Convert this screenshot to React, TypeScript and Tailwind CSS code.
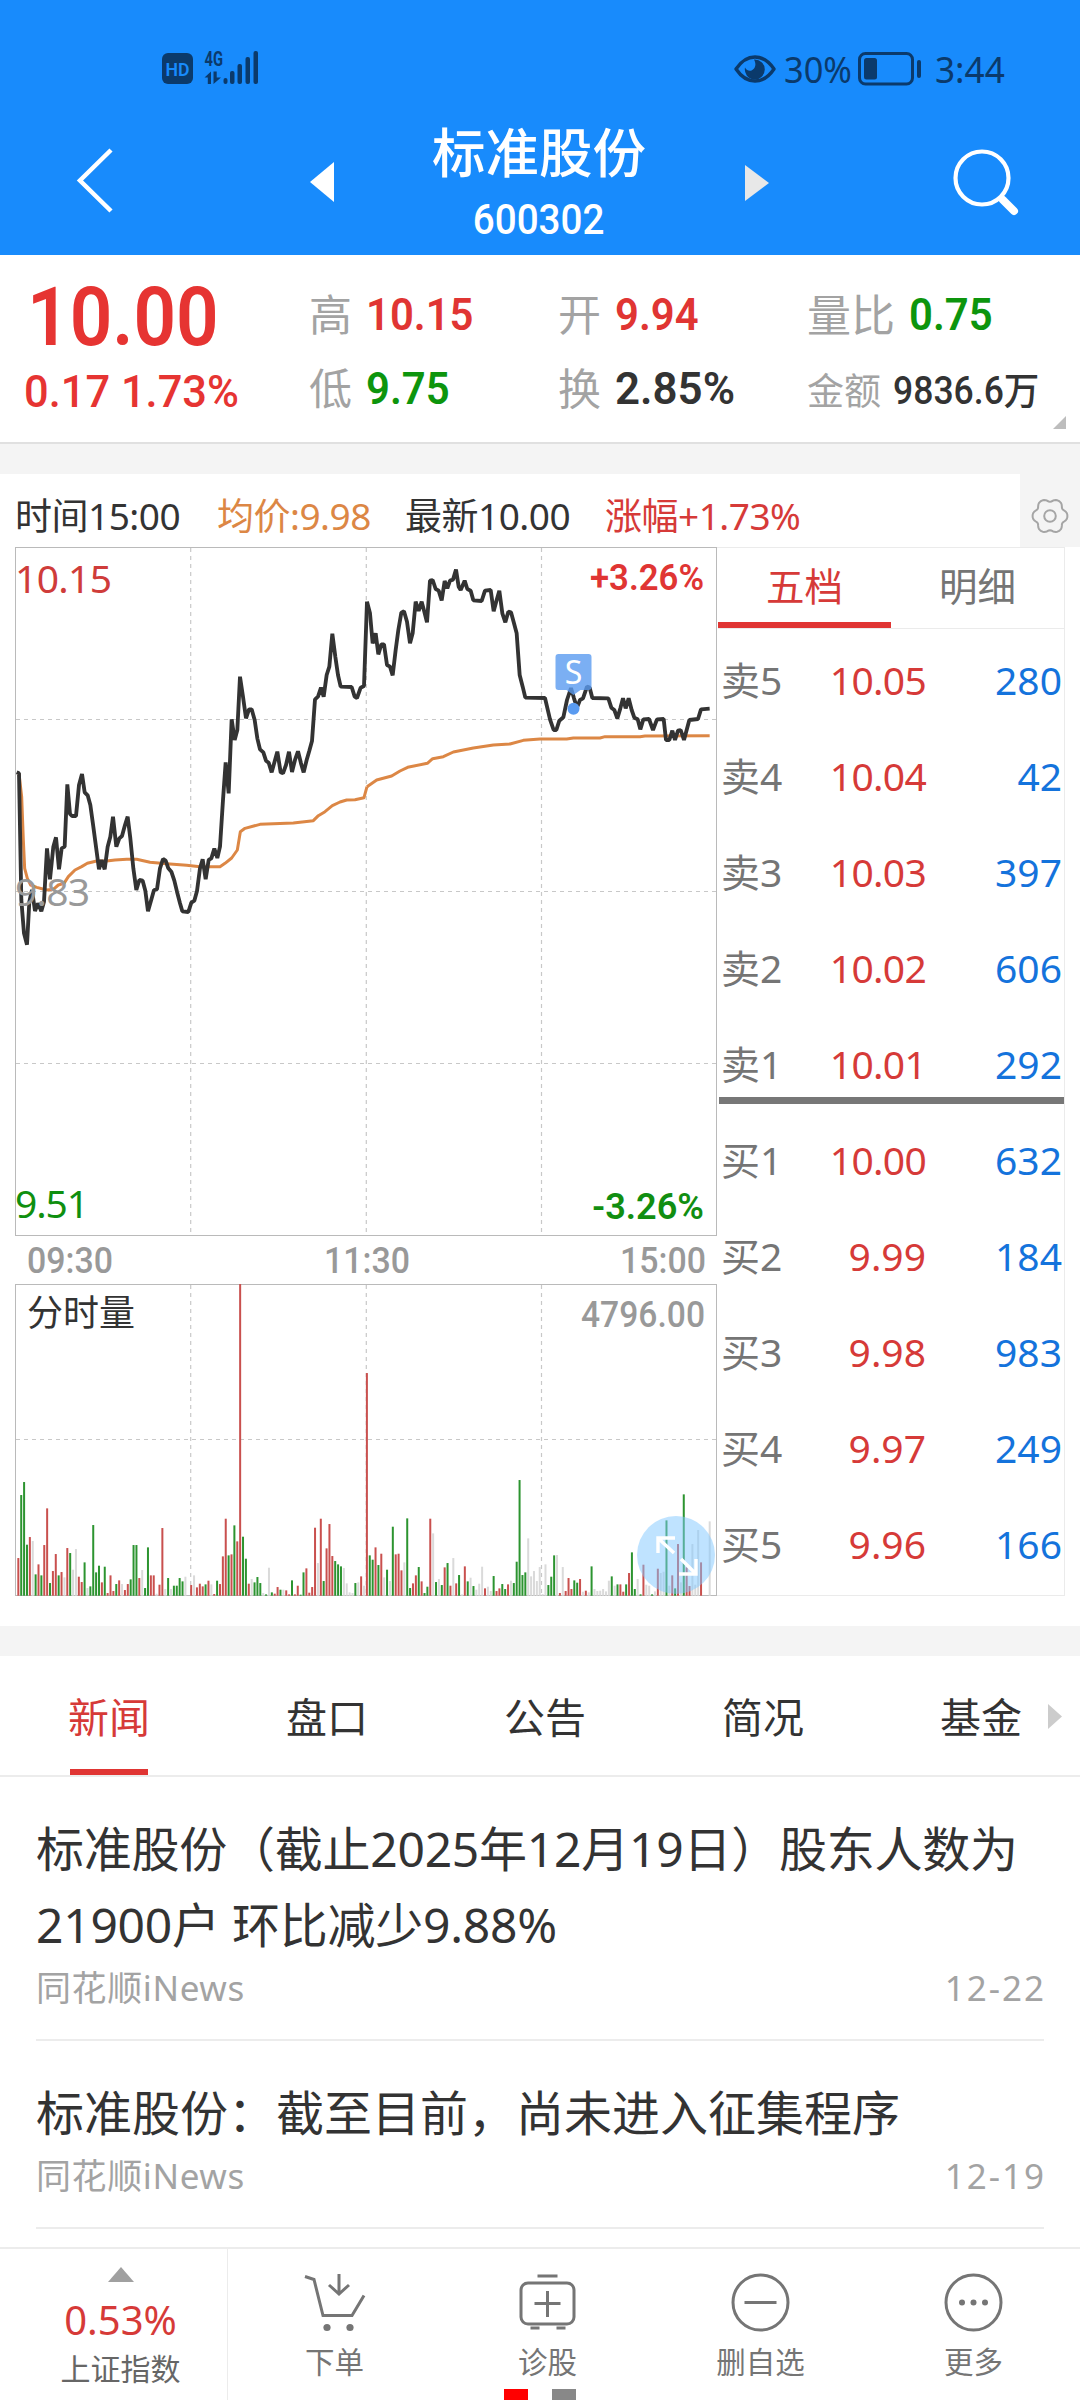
import React from 'react';
import clsx from 'clsx';

const STATS = [
  { label: '高', value: '10.15', color: 'text-[#e03533]', label2: '低', value2: '9.75', color2: 'text-[#0d950d]' },
  { label: '开', value: '9.94', color: 'text-[#e03533]', label2: '换', value2: '2.85%', color2: 'text-[#333]' },
];

const SELLS = [
  ['卖5', '10.05', '280'],
  ['卖4', '10.04', '42'],
  ['卖3', '10.03', '397'],
  ['卖2', '10.02', '606'],
  ['卖1', '10.01', '292'],
];

const BUYS = [
  ['买1', '10.00', '632'],
  ['买2', '9.99', '184'],
  ['买3', '9.98', '983'],
  ['买4', '9.97', '249'],
  ['买5', '9.96', '166'],
];

const NEWS = [
  { title: '标准股份（截止2025年12月19日）股东人数为21900户 环比减少9.88%', source: '同花顺iNews', date: '12-22', tight: true },
  { title: '标准股份：截至目前，尚未进入征集程序', source: '同花顺iNews', date: '12-19', tight: false },
];

// Both lines are kept in thirds of a pixel, in two halves: before and after the lunch break
const PRICE_AM =
  '50,697 57,700 64,1080 72,1180 81,1214 88,1085 96,1050 105,1113 114,1090 124,1114 132,1085 141,925 150,1018 160,920 168,892 177,988 185,925 194,920 202,733 210,822 216,828 228,828 237,735 246,702 254,757 263,766 271,795 280,860 297,988 305,960 314,988 323,920 331,890 339,830 349,920 358,895 366,888 375,855 383,830 391,895 400,985 409,1050 418,1020 428,1022 436,1052 444,1114 453,1082 462,1050 471,1048 480,985 489,957 497,962 505,985 514,995 523,1022 531,1055 540,1090 547,1114 565,1116 574,1088 583,1082 591,1053 600,985 608,958 617,1018 626,960 634,955 643,926 652,954 660,920 669,780 677,667 686,760 695,538 704,600 712,570 720,410 729,470 738,535 747,508 755,508 764,540 772,595 780,628 790,637 798,662 806,668 815,697 832,635 842,697 849,700 858,675 867,635 876,696 885,660 894,634 903,670 911,697 920,660 928,632 936,603 945,478 954,470 963,443 971,470 980,405 988,380 997,281 1006,350 1014,405 1022,440 1055,441 1064,470 1071,474 1082,443 1092,438 1101,185';
const PRICE_PM =
  '51,185 60,220 68,310 77,280 85,343 94,313 102,313 111,375 120,380 128,406 137,330 145,270 154,218 162,214 171,245 180,310 188,280 197,185 206,213 215,185 223,215 231,247 240,122 248,120 257,147 266,152 275,181 284,123 292,145 300,122 309,119 318,89 326,140 332,150 344,122 352,147 362,152 370,181 395,183 405,152 422,150 431,214 440,180 448,152 457,220 466,247 475,215 483,217 492,250 500,280 509,405 518,440 526,473 585,474 600,538 611,570 619,570 628,542 640,532 651,480 663,444 672,475 681,503 690,480 699,475 711,440 719,443 727,474 775,475 784,503 793,510 802,535 811,505 819,475 827,505 836,475 845,510 853,533 863,538 871,568 880,538 897,537 909,570 921,538 941,537 948,600 958,600 967,572 975,600 984,572 992,570 1002,600 1018,540 1044,537 1053,508 1079,506';
const AVG_AM =
  '57,700 65,770 70,900 74,985 82,1015 92,1035 110,1042 140,1050 160,1048 175,1035 192,1030 205,1010 225,990 245,980 262,970 290,963 320,963 345,960 380,958 410,958 450,967 500,971 560,976 600,980 660,980 675,970 695,954 712,930 721,875 735,865 780,853 880,849 940,842 955,827 975,815 997,797 1020,786 1040,780 1065,779 1092,773 1101,740';
const AVG_PM =
  '51,740 80,720 125,708 150,693 173,682 232,670 248,656 280,650 310,636 370,624 430,615 480,612 520,601 570,597 650,597 670,594 750,594 765,590 870,590 885,588 1079,587';

// One bar per minute: r = up, g = down, n = unchanged
const VOLUME =
  'r113 g302 g341 g153 r176 n164 g64 r94 g61 r152 r262 g38 r74 r125 g61 r71 n55 r143 g128 n78 n140 r57 r41 g100 n23 g28 g212 g70 g90 r40 g87 r8 r61 r14 g35 r46 n35 r17 r35 g49 g152 g152 r53 n77 g23 g145 r61 r61 n6 r33 r203 n20 g53 n20 g30 g30 g53 g43 n57 n0 r32 n61 r25 r36 r28 g34 r45 n34 r5 g45 r35 r118 r231 g121 r124 g211 r163 r935 g177 g111 r36 n50 g40 g56 g38 n8 g4 n84 g10 r6 r26 g18 n18 r16 r4 g46 r4 r30 g3 g70 r82 r9 r26 r204 n98 r231 g44 r142 r215 r119 g104 g94 g88 n83 n37 n10 n8 g38 n40 r58 n30 ' +
  'r668 g121 g108 r145 g92 r126 n55 g78 n44 g207 r124 r126 r76 n100 g232 g23 r37 r61 g86 r43 g8 g27 r231 n187 g41 n50 g32 r85 g98 r30 n113 r37 g62 n4 r88 g43 n54 g29 n18 n36 n87 r22 n27 n14 g59 r14 r22 g35 g20 r34 n45 g38 g102 g347 g62 g70 n172 n58 n74 n44 n86 n5 n94 g32 g57 g121 n122 r8 n86 r14 r53 r20 g46 g39 r50 n12 r15 n10 g88 n20 n14 n15 n20 n13 n45 g58 n30 g34 r34 r12 g34 r68 g130 g20 n50 g4 r93 n33 n30 g4 n13 r81 n68 n72 g226 n30 r61 g22 r155 n40 g304 r85 r29 n155 n33 n197 r100 n0 n0 n223';

const BAR_COLORS: Record<string, string> = { r: '#c9504e', g: '#2c9430', n: '#dadada' };

const bars = VOLUME.split(' ').map((item, i) => ({
  x: (55 + i * 8.642) / 3,
  height: Number(item.slice(1)) / 3,
  fill: BAR_COLORS[item[0]],
}));

const gearPoints = Array.from({ length: 73 }, (_, i) => {
  const a = (i * Math.PI) / 36;
  const r = 16.1 + 1.6 * Math.cos(6 * a) - 0.3 * Math.cos(12 * a);
  return `${(20 + r * Math.cos(a)).toFixed(2)},${(20 + r * Math.sin(a)).toFixed(2)}`;
}).join(' ');

const StatusBar: React.FC = () => (
  <div className="flex h-[104px] items-start justify-between pl-[161px] pr-[73px] pt-[48px] text-[#0b3a6b]">
    <svg width="100" height="40" viewBox="161 48 100 40">
      <rect x="162" y="53" width="31" height="31" rx="6" fill="#0b3a6b" />
      <text x="165.5" y="75.5" fontFamily="Roboto" fontWeight="600" fontSize="19" textLength="24" lengthAdjust="spacingAndGlyphs" fill="#188bfc">HD</text>
      <text x="204.5" y="66" fontFamily="Roboto" fontWeight="700" fontSize="21" textLength="18.5" lengthAdjust="spacingAndGlyphs" fill="#0b3a6b">4G</text>
      <g fill="#0b3a6b">
        <path d="M204.500 77.500l6.500-6v12.500h-3.200v-6.500zM213.500 71.500h3.200v6h4.300l-7.500 6.500z" />
        <rect x="223.500" y="78" width="4" height="6" rx="2" />
        <rect x="230" y="71" width="4.500" height="13" rx="2" />
        <rect x="237.500" y="64" width="4.500" height="20" rx="2" />
        <rect x="245.500" y="57" width="4.500" height="27" rx="2" />
        <rect x="253.500" y="51" width="4.500" height="33" rx="2" />
      </g>
    </svg>
    <div className="flex h-[42px] items-center font-['Noto_Sans',sans-serif] text-[37px] leading-[42px]">
      <svg width="42" height="28" viewBox="0 0 42 28" fill="none">
        <path d="M2 14C8 5 14 2 21 2s13 3 19 12c-6 9-12 12-19 12S8 23 2 14z" stroke="#0b3a6b" strokeWidth="3.400" strokeLinejoin="round" />
        <path d="M20 4.500a10 10 0 1 1-9 8c2 4 6 4 8 2 3-3 3-6 1-10z" fill="#0b3a6b" />
      </svg>
      <span className="ml-[8px] inline-block w-[70px] origin-left scale-x-[0.93] whitespace-nowrap">30%</span>
      <svg className="ml-[4px]" width="64" height="34" viewBox="0 0 64 34" fill="none">
        <rect x="1.500" y="1.500" width="53" height="30.500" rx="6" stroke="#0b3a6b" strokeWidth="3" />
        <rect x="6" y="6" width="13" height="21.500" rx="2.500" fill="#0b3a6b" />
        <rect x="59" y="8" width="4" height="18" rx="2" fill="#0b3a6b" />
      </svg>
      <span className="ml-[13px] inline-block w-[72px] origin-left scale-x-[0.95] whitespace-nowrap">3:44</span>
    </div>
  </div>
);

const Header: React.FC = () => (
  <header className="h-[255px] bg-[#188bfc]">
    <StatusBar />
    <div className="flex h-[151px] items-start text-white">
      <svg className="ml-[72px] mt-[40px]" width="44" height="72" viewBox="0 0 44 72" fill="none">
        <path d="M39 6L8 36.500 39 67" stroke="#fff" strokeWidth="4.500" />
      </svg>
      <svg className="ml-[194px] mt-[58px]" width="24" height="40">
        <path d="M24 0v40L0 20z" fill="#fff" />
      </svg>
      <div className="ml-[85px] flex w-[240px] flex-col items-center">
        <h1 className="mt-[16px] text-[53.500px] font-medium leading-[66px]">标准股份</h1>
        <span className="mt-[14px] inline-block scale-x-[0.92] font-['Roboto',sans-serif] text-[42px] font-medium leading-[40px]">600302</span>
      </div>
      <svg className="ml-[86px] mt-[61px]" width="24" height="36">
        <path d="M0 0v36L24 18z" fill="#e8e8e8" />
      </svg>
      <svg className="ml-[184px] mt-[43px]" width="70" height="72" viewBox="0 0 70 72" fill="none" stroke="#fff">
        <circle cx="29" cy="31" r="26.500" strokeWidth="4.200" />
        <path d="M50 53l11 11" strokeWidth="8" strokeLinecap="round" />
      </svg>
    </div>
  </header>
);

const Quote: React.FC = () => (
  <section className="relative flex h-[189px] border-b-2 border-[#e0e0e0] bg-white">
    <div className="w-[309px] font-['Roboto',sans-serif] text-[#e63432]">
      <div className="ml-[27px] mt-[17px] origin-left scale-x-[0.91] whitespace-nowrap text-[82px] font-semibold leading-[90px]">10.00</div>
      <div className="ml-[24px] mt-[6px] origin-left scale-x-[0.965] whitespace-nowrap text-[45px] font-medium leading-[48px]">0.17 1.73%</div>
    </div>
    {STATS.map((s) => (
      <div key={s.label} className="flex w-[249px] flex-col pt-[35px]">
        <div className="flex h-[50px] items-center whitespace-nowrap">
          <span className="w-[57px] text-[43px] leading-[50px] text-[#a3a3a3]">{s.label}</span>
          <span className={clsx("origin-left scale-x-[0.93] font-['Roboto',sans-serif] text-[45px] font-semibold leading-[50px]", s.color)}>{s.value}</span>
        </div>
        <div className="mt-[24px] flex h-[50px] items-center whitespace-nowrap">
          <span className="w-[57px] text-[43px] leading-[50px] text-[#a3a3a3]">{s.label2}</span>
          <span
            className={clsx(
              "origin-left font-['Roboto',sans-serif] text-[45px] font-semibold leading-[50px]",
              s.value2.endsWith('%') ? 'scale-x-[0.975]' : 'scale-x-[0.93]',
              s.color2
            )}
          >
            {s.value2}
          </span>
        </div>
      </div>
    ))}
    <div className="flex flex-col pt-[35px]">
      <div className="flex h-[50px] items-center whitespace-nowrap">
        <span className="w-[102px] text-[44px] leading-[50px] text-[#a3a3a3]">量比</span>
        <span className="origin-left scale-x-[0.93] font-['Roboto',sans-serif] text-[45px] font-semibold leading-[50px] text-[#0d950d]">0.75</span>
      </div>
      <div className="mt-[24px] flex h-[54px] items-center whitespace-nowrap">
        <span className="w-[86px] text-[37px] leading-[50px] text-[#a3a3a3]">金额</span>
        <span className="origin-left scale-x-[0.935] font-['Roboto','Noto_Sans_CJK_SC',sans-serif] text-[38px] font-medium leading-[50px] text-[#333]">9836.6万</span>
      </div>
    </div>
    <svg className="absolute bottom-[13px] right-[14px]" width="13" height="13">
      <path d="M13 0v13H0z" fill="#bdbdbd" />
    </svg>
  </section>
);

const InfoBar: React.FC = () => (
  <div className="flex h-[73px] bg-white text-[37px] leading-[84px] text-[#333]">
    <div className="flex flex-1 whitespace-nowrap pl-[15px] tracking-[-0.5px]">
      <span className="w-[202px]">时间15:00</span>
      <span className="w-[188px] text-[#dc8745]">均价:9.98</span>
      <span className="w-[200px]">最新10.00</span>
      <span className="text-[#d63a38]">涨幅+1.73%</span>
    </div>
    <div className="flex w-[60px] justify-center bg-[#f4f4f4] pt-[22px]">
      <svg width="40" height="40" viewBox="0 0 40 40" fill="none" stroke="#a5a5a5" strokeWidth="2">
        <polygon points={gearPoints} strokeLinejoin="round" />
        <circle cx="20" cy="20" r="5.800" />
      </svg>
    </div>
  </div>
);

const Chart: React.FC = () => (
  <svg className="ml-[15px]" width="702" height="1050" viewBox="15 547 702 1050" fontFamily="Roboto, sans-serif">
    <g fill="none" stroke="#bababa" strokeWidth="1">
      <rect x="15.500" y="547.500" width="701" height="688" />
      <rect x="15.500" y="1284.500" width="701" height="311" />
    </g>
    <g stroke="#c8c8c8" strokeWidth="1.200" strokeDasharray="4 4">
      {[190.7, 366.3, 541.5].map((x) => (
        <path key={x} d={`M${x} 548V1235M${x} 1285V1595`} />
      ))}
      <path d="M16 719.500H716M16 891.500H716M16 1063.500H716M16 1439.500H716" />
    </g>

    <g fill="none" stroke="#dc8745" strokeWidth="9" strokeLinejoin="round">
      <polyline points={AVG_AM} transform="translate(0 540) scale(.33333)" />
      <polyline points={AVG_PM} transform="translate(350 540) scale(.33333)" />
    </g>
    <g fill="none" stroke="#333" strokeWidth="11.500" strokeLinejoin="bevel">
      <polyline points={PRICE_AM} transform="translate(0 540) scale(.33333)" />
      <polyline points={PRICE_PM} transform="translate(350 540) scale(.33333)" />
    </g>

    {/* Sell marker */}
    <g fill="#5a9bf0">
      <path fillOpacity=".8" d="M558.500 654h30a3 3 0 0 1 3 3v30a3 3 0 0 1-3 3h-8l-7 5-7-5h-8a3 3 0 0 1-3-3v-30a3 3 0 0 1 3-3z" />
      <circle cx="573.500" cy="708.700" r="6" />
    </g>
    <text x="573.500" y="684" textAnchor="middle" fontFamily="Noto Sans" fontSize="32" fill="#fff">S</text>

    <g fontFamily="Noto Sans, sans-serif" fontSize="39">
      <text x="15" y="592.500" fill="#cf3c3a" textLength="97">10.15</text>
      <text x="15" y="906" fill="#999" textLength="75">9.83</text>
      <text x="15" y="1218" fill="#0f8f0f" textLength="74">9.51</text>
    </g>
    <g fontSize="36" fontWeight="600">
      <text x="590" y="589.500" fill="#e03533" textLength="114" lengthAdjust="spacingAndGlyphs">+3.26%</text>
      <text x="592" y="1218.500" fill="#118e11" textLength="112" lengthAdjust="spacingAndGlyphs">-3.26%</text>
    </g>
    <g fontSize="36" fontWeight="500" fill="#999">
      <text x="27" y="1273" textLength="86" lengthAdjust="spacingAndGlyphs">09:30</text>
      <text x="324" y="1273" textLength="86" lengthAdjust="spacingAndGlyphs">11:30</text>
      <text x="620" y="1273" textLength="86" lengthAdjust="spacingAndGlyphs">15:00</text>
      <text x="581" y="1326.500" textLength="124" lengthAdjust="spacingAndGlyphs">4796.00</text>
    </g>
    <text x="27" y="1326" fontFamily="Noto Sans CJK SC" fontSize="36" fill="#333">分时量</text>

    {bars.map((b, i) => (
      <rect key={i} x={b.x - 1} y={1595.700 - b.height} width="2" height={b.height} fill={b.fill} />
    ))}

    {/* Full screen button */}
    <circle cx="676" cy="1555" r="39" fill="#7fc8ff" fillOpacity=".5" />
    <path d="M674 1553l-15-14M658 1553v-15h17M681 1559l14 14M696 1559v15h-17" fill="none" stroke="#fff" strokeWidth="3.400" />
  </svg>
);

const OrderRow: React.FC<{ row: string[]; last?: boolean }> = ({ row, last }) => (
  <div className="relative flex h-[96px] items-center pb-[2px] pl-[3px] text-[39px] leading-[50px]">
    <span className="w-[82px] whitespace-nowrap text-[#757575]">{row[0]}</span>
    <span className={clsx('w-[123px] text-right text-[#d63a38]', row[1].length > 4 && 'tracking-[-0.7px]')}>{row[1]}</span>
    <span className="w-[136px] text-right text-[#1473dc]">{row[2]}</span>
    {last && <div className="absolute bottom-[9px] left-px right-0 h-[7px] bg-[#777]" />}
  </div>
);

const OrderBook: React.FC = () => (
  <div className="h-[1049px] w-[348px] border-y border-r border-[#ebebeb] pl-px">
    <div className="flex h-[81px] border-b border-[#ebebeb] text-center text-[38.500px] leading-[77px]">
      <div className="h-[80px] w-[173px] border-b-[6px] border-[#e03533] text-[#d63a38]">五档</div>
      <div className="w-[173px] text-[#757575]">明细</div>
    </div>
    <div className="pt-[4px]">
      {SELLS.map((row, i) => (
        <OrderRow key={row[0]} row={row} last={i === SELLS.length - 1} />
      ))}
      {BUYS.map((row) => (
        <OrderRow key={row[0]} row={row} />
      ))}
    </div>
  </div>
);

const NewsTabs: React.FC = () => (
  <div className="relative flex h-[121px] overflow-hidden border-b-2 border-[#ececec] bg-white text-[41px] leading-[122px] text-[#333]">
    {['新闻', '盘口', '公告', '简况', '基金'].map((tab, i) => (
      <div key={tab} className={clsx('relative w-[218px] shrink-0 text-center', i === 0 && 'text-[#d63a38]')}>
        {tab}
        {i === 0 && <div className="absolute bottom-0 left-[70px] h-[6px] w-[78px] bg-[#e03533]" />}
      </div>
    ))}
    <svg className="absolute right-[18px] top-[48px]" width="14" height="25">
      <path d="M0 0v25L14 12.500z" fill="#ccc" />
    </svg>
  </div>
);

const NewsList: React.FC = () => (
  <div className="h-[470px] bg-white px-[36px]">
    {NEWS.map((item) => (
      <article key={item.date} className="border-b-2 border-[#ececec] pb-[26px] pt-[34px]">
        <h2 className={clsx('text-[48px] leading-[76px] text-[#333]', item.tight && 'tracking-[-0.25px]')}>{item.title}</h2>
        <div className="flex justify-between text-[35px] leading-[50px] text-[#a3a3a3]">
          <span className="tracking-[0.6px]">{item.source}</span>
          <span className="mr-[-2px] tracking-[2px]">{item.date}</span>
        </div>
      </article>
    ))}
  </div>
);

const ACTIONS = [
  {
    label: '下单',
    icon: (
      <>
        <path d="M2 3.500l9 3 9 36h29l12-20" />
        <path d="M36 1v20M26 12l10 9 10-9" />
        <circle cx="24" cy="54.500" r="3.600" fill="#757575" stroke="none" />
        <circle cx="47" cy="54.500" r="3.600" fill="#757575" stroke="none" />
      </>
    ),
  },
  {
    label: '诊股',
    icon: (
      <>
        <rect x="5" y="10" width="53" height="41" rx="7" />
        <path d="M21.500 3h20M14.500 55h9M40.500 55h9M31.500 18v26M18.500 30.500h26" />
      </>
    ),
  },
  {
    label: '删自选',
    icon: (
      <>
        <circle cx="31.500" cy="29.500" r="27.500" />
        <path d="M15.500 29.500h32" />
      </>
    ),
  },
  {
    label: '更多',
    icon: (
      <>
        <circle cx="31.500" cy="29.500" r="27.500" />
        <g fill="#757575" stroke="none">
          <circle cx="20" cy="29.500" r="3" />
          <circle cx="31.500" cy="29.500" r="3" />
          <circle cx="43" cy="29.500" r="3" />
        </g>
      </>
    ),
  },
];

const BottomBar: React.FC = () => (
  <footer className="relative flex h-[153px] border-t-2 border-[#ececec] bg-white">
    <div className="flex w-[228px] flex-col items-center border-r border-[#ececec] pl-[14px]">
      <svg className="mt-[18px]" width="26" height="15">
        <path d="M13 0l13 15H0z" fill="#a0a0a0" />
      </svg>
      <span className="mt-[14px] text-[40px] leading-[48px] text-[#d63a38]">0.53%</span>
      <span className="mt-[5px] text-[30px] leading-[40px] text-[#666]">上证指数</span>
    </div>
    {ACTIONS.map((a) => (
      <div key={a.label} className="flex w-[213px] flex-col items-center">
        <svg className="mt-[24px]" width="63" height="60" viewBox="0 0 63 60" fill="none" stroke="#757575" strokeWidth="3">
          {a.icon}
        </svg>
        <span className="mt-[9px] text-[29.500px] leading-[40px] text-[#757575]">{a.label}</span>
      </div>
    ))}
    <div className="absolute bottom-0 left-[504px] flex gap-[24px]">
      <div className="h-[11px] w-[24px] bg-[#ff0000]" />
      <div className="h-[11px] w-[24px] bg-[#888]" />
    </div>
  </footer>
);

export default function App() {
  return (
    <div className="flex h-[2400px] w-[1080px] flex-col overflow-hidden bg-[#f4f4f4] font-['Noto_Sans','Noto_Sans_CJK_SC',sans-serif]">
      <Header />
      <Quote />
      <div className="mt-[30px]">
        <InfoBar />
      </div>
      <div className="flex h-[1079px] bg-white">
        <Chart />
        <OrderBook />
      </div>
      <div className="mt-[30px]">
        <NewsTabs />
      </div>
      <NewsList />
      <BottomBar />
    </div>
  );
}
